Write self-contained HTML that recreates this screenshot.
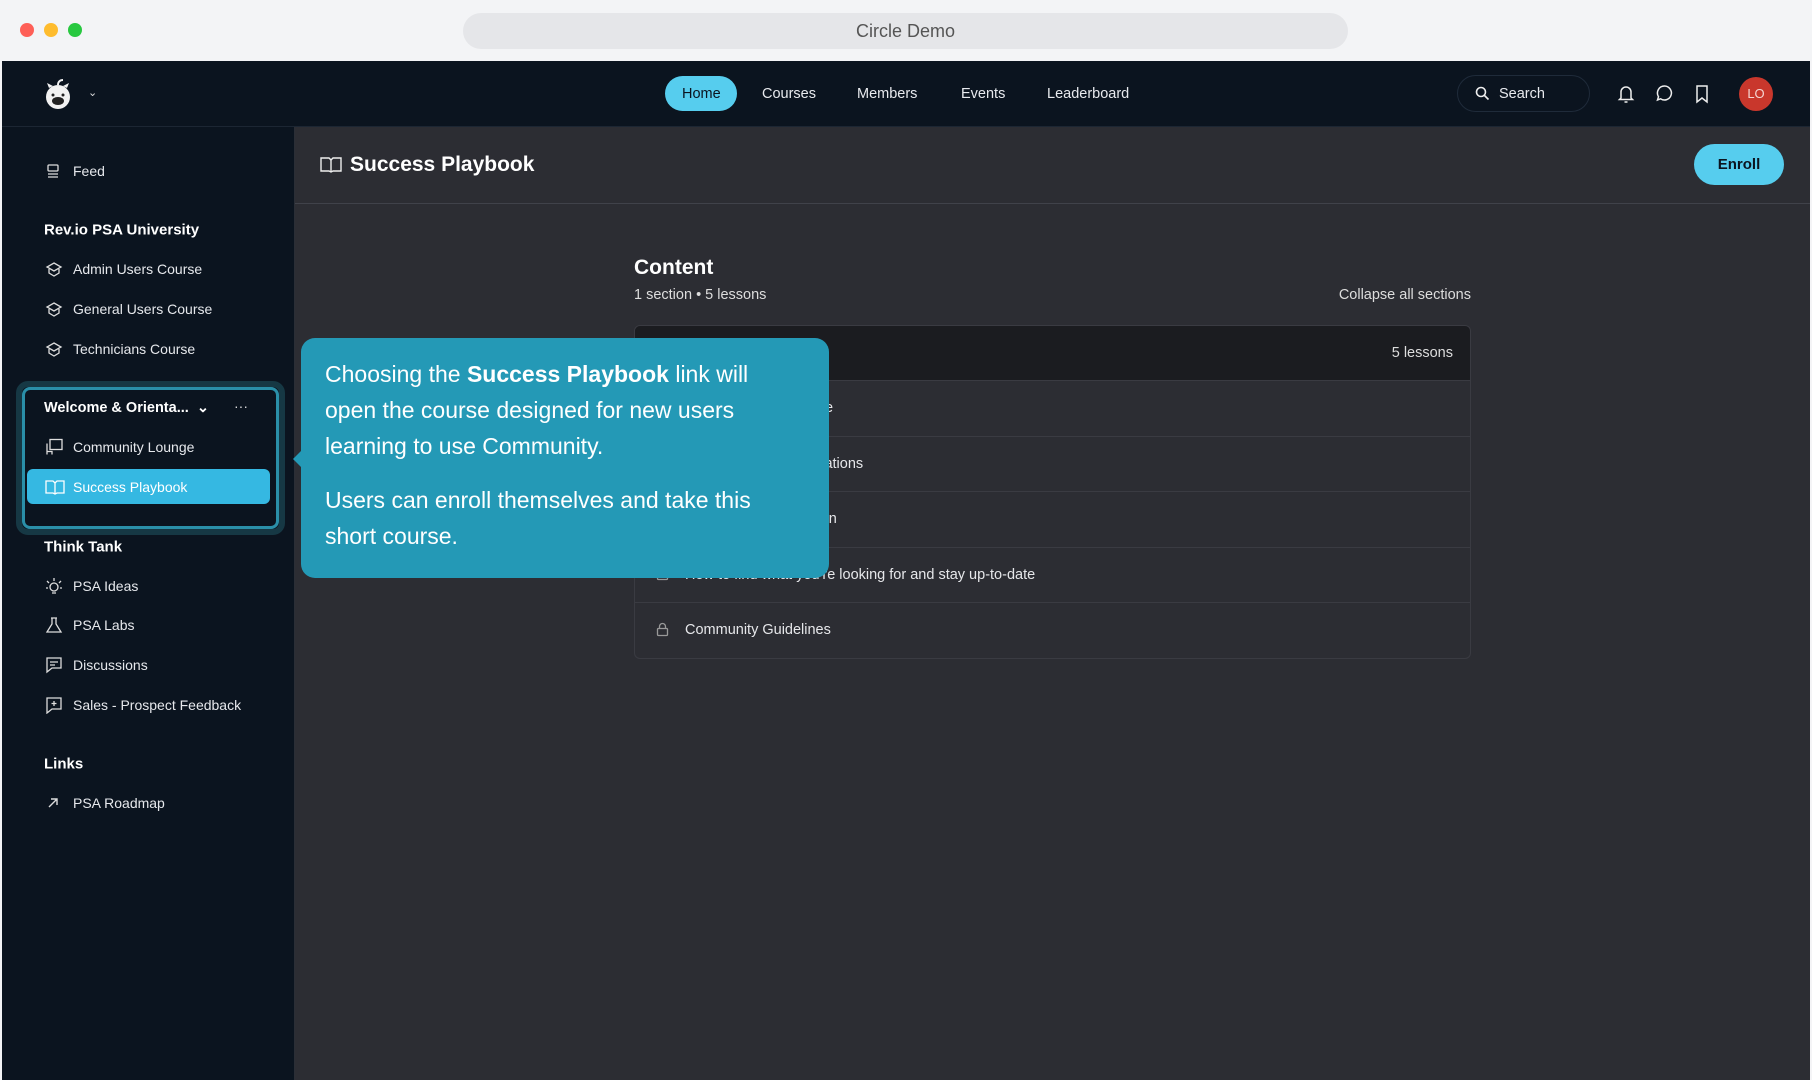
<!DOCTYPE html>
<html><head><meta charset="utf-8"><style>
*{box-sizing:border-box;margin:0;padding:0}
body{width:1812px;height:1080px;overflow:hidden;background:#f4f4f6;font-family:"Liberation Sans",sans-serif;position:relative}
.a{position:absolute}
.tb{left:0;top:0;width:1812px;height:61px;background:#f3f4f6}
.dot{width:14px;height:14px;border-radius:50%;top:23px}
.url{left:463px;top:13px;width:885px;height:36px;border-radius:18px;background:#e5e6e9;color:#555;font-size:18px;text-align:center;line-height:36px}
.nav{left:2px;top:61px;width:1808px;height:66px;background:#0b141f;border-bottom:1px solid #1c2633}
.nl{color:#e8eaee;font-size:14.5px;top:94px;transform:translateY(-50%)}
.side{left:2px;top:127px;width:293px;height:953px;background:#0b141f;border-right:1px solid #2a2e36}
.main{left:295px;top:127px;width:1515px;height:953px;background:#2c2d33}
.si{left:73px;color:#e6e8ec;font-size:14px;transform:translateY(-50%)}
.sh{left:44px;color:#fff;font-size:15px;font-weight:bold;transform:translateY(-50%)}
.ic{left:45px;transform:translateY(-50%)}
.row{left:634px;width:837px;height:55px;border-top:1px solid #3a3b42;color:#e6e7ea;font-size:14.5px;line-height:55px;padding-left:51px}
</style></head><body>
<div class="a tb"></div>
<div class="a dot" style="left:20px;background:#fe5f57"></div>
<div class="a dot" style="left:44px;background:#febc2e"></div>
<div class="a dot" style="left:68px;background:#28c840"></div>
<div class="a url">Circle Demo</div>
<div class="a nav"></div>
<svg class="a" style="left:40px;top:76px" width="36" height="36" viewBox="0 0 36 36"><circle cx="18" cy="21" r="12" fill="#f2f2f2"/><path d="M9 12l-2-5 6 3M27 12l2-5-6 3" fill="#f2f2f2"/><path d="M18 9c0-3 2-5 5-5" stroke="#f2f2f2" stroke-width="2" fill="none"/><ellipse cx="18" cy="25" rx="6" ry="4" fill="#222"/><circle cx="13" cy="19" r="1.5" fill="#222"/><circle cx="23" cy="19" r="1.5" fill="#222"/></svg>
<div class="a" style="left:88px;top:86px;color:#ddd;font-size:11px">&#8964;</div>
<div class="a" style="left:665px;top:76px;width:72px;height:35px;border-radius:18px;background:#56cdee"></div>
<div class="a nl" style="left:682px;color:#0b141f">Home</div>
<div class="a nl" style="left:762px">Courses</div>
<div class="a nl" style="left:857px">Members</div>
<div class="a nl" style="left:961px">Events</div>
<div class="a nl" style="left:1047px">Leaderboard</div>
<div class="a" style="left:1457px;top:75px;width:133px;height:37px;border-radius:19px;border:1px solid #1f2b3a"></div>
<svg class="a" style="left:1475px;top:86px" width="15" height="15" viewBox="0 0 15 15" fill="none" stroke="#eee" stroke-width="1.6"><circle cx="6" cy="6" r="4.5"/><path d="M9.5 9.5l4 4"/></svg>
<div class="a nl" style="left:1499px">Search</div>
<svg class="a" style="left:1617px;top:84px" width="18" height="20" viewBox="0 0 18 20" fill="none" stroke="#eee" stroke-width="1.5"><path d="M4 14V8a5 5 0 0110 0v6l1.5 1.5h-13z"/><path d="M7.5 18h3"/></svg>
<svg class="a" style="left:1655px;top:84px" width="19" height="19" viewBox="0 0 19 19" fill="none" stroke="#eee" stroke-width="1.5"><path d="M9.5 2a7 7 0 11-4 12.8L2.5 16l1-3.3A7 7 0 019.5 2z"/></svg>
<svg class="a" style="left:1694px;top:84px" width="16" height="20" viewBox="0 0 16 20" fill="none" stroke="#eee" stroke-width="1.5"><path d="M3 2h10v16l-5-4-5 4z"/></svg>
<div class="a" style="left:1739px;top:77px;width:34px;height:34px;border-radius:50%;background:#c9372c;color:#f5d5d2;font-size:13px;text-align:center;line-height:34px">LO</div>

<div class="a side"></div>
<svg class="a ic" style="top:171px" width="16" height="16" viewBox="0 0 16 16" fill="none" stroke="#ddd" stroke-width="1.3"><rect x="3" y="2" width="10" height="6" rx="1"/><path d="M3 11h10M3 14h10"/></svg>
<div class="a si" style="top:171px">Feed</div>
<div class="a sh" style="top:230px">Rev.io PSA University</div>
<svg class="a ic" style="top:269px" width="18" height="16" viewBox="0 0 18 16" fill="none" stroke="#ddd" stroke-width="1.3"><path d="M9 2l7 4-7 4-7-4z"/><path d="M4 8v4l5 3 5-3V8"/></svg>
<div class="a si" style="top:269px">Admin Users Course</div>
<svg class="a ic" style="top:309px" width="18" height="16" viewBox="0 0 18 16" fill="none" stroke="#ddd" stroke-width="1.3"><path d="M9 2l7 4-7 4-7-4z"/><path d="M4 8v4l5 3 5-3V8"/></svg>
<div class="a si" style="top:309px">General Users Course</div>
<svg class="a ic" style="top:349px" width="18" height="16" viewBox="0 0 18 16" fill="none" stroke="#ddd" stroke-width="1.3"><path d="M9 2l7 4-7 4-7-4z"/><path d="M4 8v4l5 3 5-3V8"/></svg>
<div class="a si" style="top:349px">Technicians Course</div>
<div class="a" style="left:16px;top:381px;width:269px;height:154px;border-radius:12px;border:6px solid #163844"></div>
<div class="a" style="left:22px;top:387px;width:257px;height:142px;border-radius:8px;border:3px solid #2a8fa8"></div>
<div class="a sh" style="top:408px;font-size:14.5px">Welcome &amp; Orienta... &nbsp;&#8964;</div>
<div class="a" style="left:234px;top:398px;color:#ddd;font-size:14px">&middot;&middot;&middot;</div>
<svg class="a ic" style="top:447px" width="18" height="17" viewBox="0 0 18 17" fill="none" stroke="#ddd" stroke-width="1.3"><rect x="5" y="1" width="12" height="10"/><path d="M2 5v11M2 13h5v3"/></svg>
<div class="a si" style="top:447px">Community Lounge</div>
<div class="a" style="left:27px;top:469px;width:243px;height:35px;border-radius:6px;background:#35b8e2"></div>
<svg class="a ic" style="top:487px" width="20" height="16" viewBox="0 0 20 16" fill="none" stroke="#fff" stroke-width="1.3"><path d="M1 2h7l2 2 2-2h7v12h-7l-2 1-2-1H1z"/><path d="M10 4v11"/></svg>
<div class="a si" style="top:487px;color:#fff">Success Playbook</div>
<div class="a sh" style="top:547px">Think Tank</div>
<svg class="a ic" style="top:586px" width="18" height="18" viewBox="0 0 18 18" fill="none" stroke="#ddd" stroke-width="1.3"><circle cx="9" cy="10" r="4"/><path d="M9 1v3M2 4l2 2M16 4l-2 2M1 11h2M15 11h2M7 16h4"/></svg>
<div class="a si" style="top:586px">PSA Ideas</div>
<svg class="a ic" style="top:625px" width="18" height="18" viewBox="0 0 18 18" fill="none" stroke="#ddd" stroke-width="1.3"><path d="M6 2h6M7 2v6L2 16h14L11 8V2"/></svg>
<div class="a si" style="top:625px">PSA Labs</div>
<svg class="a ic" style="top:665px" width="18" height="18" viewBox="0 0 18 18" fill="none" stroke="#ddd" stroke-width="1.3"><path d="M2 2h14v10H7l-5 4z"/><path d="M5 6h8M5 9h5"/></svg>
<div class="a si" style="top:665px">Discussions</div>
<svg class="a ic" style="top:705px" width="18" height="18" viewBox="0 0 18 18" fill="none" stroke="#ddd" stroke-width="1.3"><path d="M2 2h14v11H7l-5 4z"/><path d="M9 5v5M6.5 7.5h5"/></svg>
<div class="a si" style="top:705px">Sales - Prospect Feedback</div>
<div class="a sh" style="top:764px">Links</div>
<svg class="a ic" style="top:803px;left:47px" width="12" height="12" viewBox="0 0 12 12" fill="none" stroke="#ddd" stroke-width="1.4"><path d="M2 10l8-8M4 2h6v6"/></svg>
<div class="a si" style="top:803px">PSA Roadmap</div>

<div class="a main"></div>
<div class="a" style="left:295px;top:203px;width:1515px;height:1px;background:#40424a"></div>
<svg class="a" style="left:320px;top:156px" width="22" height="18" viewBox="0 0 22 18" fill="none" stroke="#eee" stroke-width="1.4"><path d="M1 2h8l2 2 2-2h8v13h-8l-2 1-2-1H1z"/><path d="M11 4v12"/></svg>
<div class="a" style="left:350px;top:153px;color:#fff;font-size:21px;font-weight:bold">Success Playbook</div>
<div class="a" style="left:1694px;top:144px;width:90px;height:41px;border-radius:21px;background:#56cdee;color:#0b141f;font-size:15px;font-weight:bold;text-align:center;line-height:41px">Enroll</div>
<div class="a" style="left:634px;top:256px;color:#fff;font-size:21px;font-weight:bold">Content</div>
<div class="a" style="left:634px;top:287px;color:#ddd;font-size:14.5px">1 section &bull; 5 lessons</div>
<div class="a" style="left:1300px;top:287px;width:171px;text-align:right;color:#ddd;font-size:14.5px">Collapse all sections</div>
<div class="a" style="left:634px;top:325px;width:837px;height:334px;border:1px solid #3a3b42;border-radius:6px"></div>
<div class="a" style="left:635px;top:326px;width:835px;height:54px;background:#1b1c20;border-radius:5px 5px 0 0;color:#fff;font-size:15px;line-height:54px;padding-left:50px">Onboarding Checklist<span style="float:right;padding-right:17px;font-size:14.5px;color:#ddd">5 lessons</span></div>
<div class="a row" style="top:380px">Welcome to the course</div>
<div class="a row" style="top:436px">Setting up your notifications</div>
<div class="a row" style="top:491px">Your profile introduction</div>
<div class="a row" style="top:547px">How to find what you're looking for and stay up-to-date</div>
<div class="a row" style="top:602px">Community Guidelines</div>
<svg class="a" style="left:656px;top:622px" width="13" height="15" viewBox="0 0 13 15" fill="none" stroke="#999" stroke-width="1.3"><rect x="1.5" y="6.5" width="10" height="7" rx="1"/><path d="M3.5 6.5V4.5a3 3 0 016 0v2"/></svg>
<svg class="a" style="left:656px;top:566px" width="13" height="15" viewBox="0 0 13 15" fill="none" stroke="#999" stroke-width="1.3"><rect x="1.5" y="6.5" width="10" height="7" rx="1"/></svg>

<div class="a" style="left:301px;top:338px;width:528px;height:240px;border-radius:14px;background:#2499b6;color:#fff;font-size:23px;line-height:36px;padding:18px 20px 0 24px">
<div style="margin-bottom:18px;width:470px">Choosing the <b>Success Playbook</b> link will open the course designed for new users learning to use Community.</div>
<div style="width:480px">Users can enroll themselves and take this short course.</div>
</div>
<div class="a" style="left:293px;top:450px;width:0;height:0;border-top:9px solid transparent;border-bottom:9px solid transparent;border-right:9px solid #2499b6"></div>
</body></html>
